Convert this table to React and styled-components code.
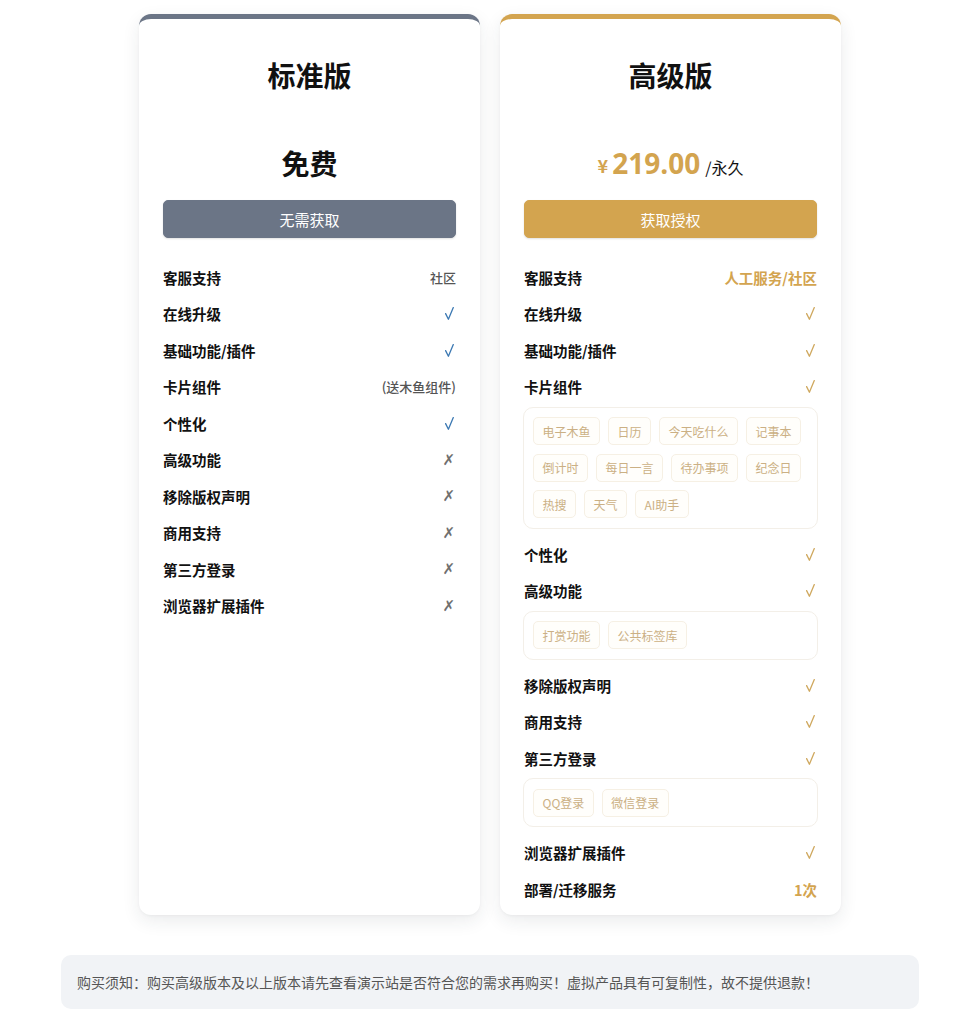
import React from "react";
import styled, { createGlobalStyle } from "styled-components";

const GlobalStyle = createGlobalStyle`
  html, body {
    margin: 0;
    padding: 0;
    background: #ffffff;
    font-family: "Noto Sans CJK SC", "Noto Sans", sans-serif;
    color: #111;
  }
`;

const GOLD = "#d3a44f";
const SLATE = "#6b7586";

const Page = styled.div`
  width: 858px;
  margin-left: 61px;
  padding-top: 14px;
  padding-bottom: 16px;
`;

const Cards = styled.div`
  display: flex;
  justify-content: center;
  gap: 20px;
`;

const Card = styled.div`
  width: 341px;
  box-sizing: border-box;
  background: #fff;
  border-top: 5px solid ${({ accent }) => accent};
  border-radius: 12px;
  box-shadow: 0 6px 18px rgba(30, 40, 60, 0.09), 0 1px 3px rgba(0, 0, 0, 0.04);
  padding: 38px 24px 7px;
  display: flex;
  flex-direction: column;
`;

const Title = styled.h2`
  margin: 0;
  text-align: center;
  font-size: 28px;
  line-height: 36px;
  font-weight: 700;
  color: #111;
`;

const Price = styled.div`
  margin-top: 50px;
  height: 40px;
  display: flex;
  align-items: center;
  justify-content: center;
  font-size: 28px;
  font-weight: 700;
  color: #111;
`;

const Currency = styled.span`
  font-size: 18px;
  color: ${GOLD};
  font-weight: 600;
  margin-right: 4px;
  margin-top: 4px;
`;

const Amount = styled.span`
  font-family: "Open Sans", "Noto Sans", sans-serif;
  font-size: 28px;
  font-weight: 700;
  color: ${GOLD};
`;

const Unit = styled.span`
  font-size: 16px;
  font-weight: 400;
  color: #111;
  margin-left: 5px;
  margin-top: 8px;
`;

const Button = styled.button`
  margin-top: 17px;
  height: 38px;
  width: 100%;
  border: 1px solid ${({ bg }) => bg};
  border-radius: 5px;
  background: ${({ bg }) => bg};
  color: #fff;
  font-family: inherit;
  font-size: 15px;
  cursor: pointer;
  box-shadow: 0 1px 2px rgba(0, 0, 0, 0.12);
`;

const List = styled.div`
  margin-top: 21px;
  display: flex;
  flex-direction: column;
`;

const Row = styled.div`
  height: 36.5px;
  display: flex;
  align-items: center;
  justify-content: space-between;
`;

const Label = styled.span`
  font-size: 14.5px;
  font-weight: 700;
  color: #111;
`;

const Value = styled.span`
  font-size: ${({ size }) => size || 13}px;
  font-weight: ${({ bold }) => (bold ? 700 : 500)};
  color: ${({ color }) => color || "#555"};
`;

const Cross = styled.span`
  font-family: "DejaVu Sans", sans-serif;
  font-size: 15px;
  color: #6f6f6f;
  margin-right: 1px;
`;

const CheckSvg = styled.svg`
  width: 9px;
  height: 13px;
  margin-right: 2px;
  display: block;
`;

const TagBox = styled.div`
  margin: 1.5px -1px 7.5px;
  padding: 9.5px 9px;
  border: 1px solid #f3efe8;
  border-radius: 10px;
  display: flex;
  flex-wrap: wrap;
  gap: 8.5px 8px;
`;

const Tag = styled.span`
  height: 28px;
  padding: 0 8.5px;
  box-sizing: border-box;
  display: inline-flex;
  align-items: center;
  white-space: nowrap;
  border: 1px solid #f6f0e4;
  border-radius: 5px;
  font-size: 12px;
  color: #cbb084;
  background: #fffefb;
`;

const Notice = styled.div`
  margin-top: 40px;
  height: 54px;
  display: flex;
  align-items: center;
  padding: 0 16px;
  background: #f1f3f6;
  border-radius: 10px;
  font-size: 14px;
  color: #555;
`;

const Check = ({ color }) => (
  <CheckSvg viewBox="0 0 9 13">
    <polyline
      points="0.6,6.6 3.4,12.2 8.3,0.6"
      fill="none"
      stroke={color}
      strokeWidth="1.3"
      strokeLinecap="round"
      strokeLinejoin="round"
    />
  </CheckSvg>
);

const standardRows = [
  ["客服支持", "社区", "text"],
  ["在线升级", "", "yes"],
  ["基础功能/插件", "", "yes"],
  ["卡片组件", "(送木鱼组件)", "text"],
  ["个性化", "", "yes"],
  ["高级功能", "", "no"],
  ["移除版权声明", "", "no"],
  ["商用支持", "", "no"],
  ["第三方登录", "", "no"],
  ["浏览器扩展插件", "", "no"],
];

const premiumRows = [
  { label: "客服支持", value: "人工服务/社区" },
  { label: "在线升级" },
  { label: "基础功能/插件" },
  {
    label: "卡片组件",
    tags: ["电子木鱼", "日历", "今天吃什么", "记事本", "倒计时", "每日一言", "待办事项", "纪念日", "热搜", "天气", "AI助手"],
  },
  { label: "个性化" },
  { label: "高级功能", tags: ["打赏功能", "公共标签库"] },
  { label: "移除版权声明" },
  { label: "商用支持" },
  { label: "第三方登录", tags: ["QQ登录", "微信登录"] },
  { label: "浏览器扩展插件" },
  { label: "部署/迁移服务", value: "1次" },
];

const StandardValue = ({ kind, children }) => {
  if (kind === "yes") return <Check color="#3b78b2" />;
  if (kind === "no") return <Cross>✗</Cross>;
  return <Value>{children}</Value>;
};

export default function App() {
  return (
    <>
      <GlobalStyle />
      <Page>
        <Cards>
          <Card accent={SLATE}>
            <Title>标准版</Title>
            <Price>免费</Price>
            <Button bg={SLATE}>无需获取</Button>
            <List>
              {standardRows.map(([label, value, kind]) => (
                <Row key={label}>
                  <Label>{label}</Label>
                  <StandardValue kind={kind}>{value}</StandardValue>
                </Row>
              ))}
            </List>
          </Card>

          <Card accent={GOLD}>
            <Title>高级版</Title>
            <Price>
              <Currency>¥</Currency>
              <Amount>219.00</Amount>
              <Unit>/永久</Unit>
            </Price>
            <Button bg={GOLD}>获取授权</Button>
            <List>
              {premiumRows.map((row) => (
                <React.Fragment key={row.label}>
                  <Row>
                    <Label>{row.label}</Label>
                    {row.value ? (
                      <Value color={GOLD} bold size={14.5}>
                        {row.value}
                      </Value>
                    ) : (
                      <Check color="#cfa85e" />
                    )}
                  </Row>
                  {row.tags && (
                    <TagBox>
                      {row.tags.map((t) => (
                        <Tag key={t}>{t}</Tag>
                      ))}
                    </TagBox>
                  )}
                </React.Fragment>
              ))}
            </List>
          </Card>
        </Cards>
        <Notice>
          购买须知：购买高级版本及以上版本请先查看演示站是否符合您的需求再购买！虚拟产品具有可复制性，故不提供退款！
        </Notice>
      </Page>
    </>
  );
}
